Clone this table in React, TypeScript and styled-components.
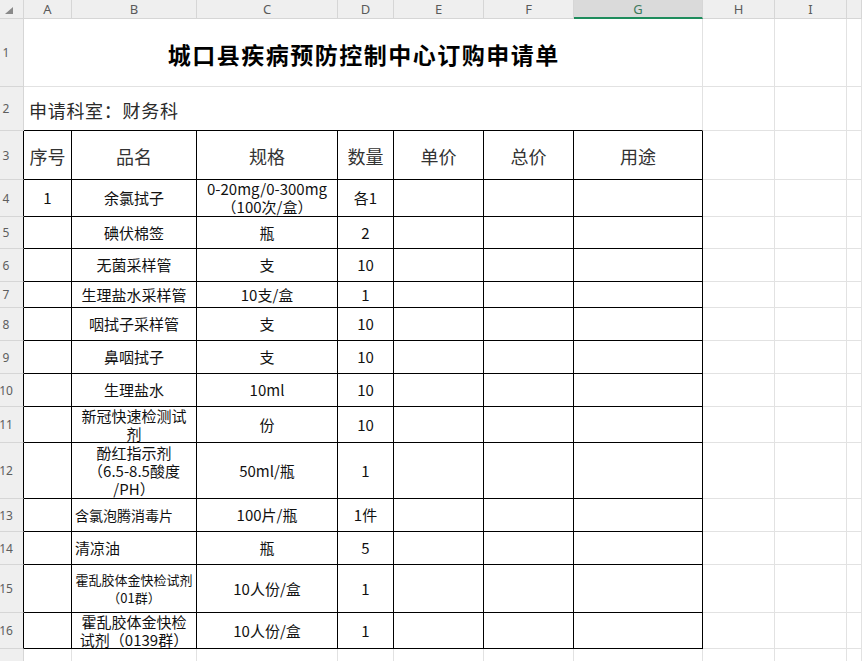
import React from "react";
import styled, { createGlobalStyle, css } from "styled-components";

const GlobalStyle = createGlobalStyle`
  html, body { margin: 0; padding: 0; background: #ffffff; overflow: hidden; }
  body { font-family: "Noto Sans CJK SC", "Noto Sans", sans-serif; }
`;

const COLS = [24, 48, 125, 141, 56, 90, 90, 129, 72, 72];
const ROWS = [19, 68, 44, 49, 37, 32, 33, 26, 33, 33, 33, 36, 56, 33, 33, 48, 36, 40];
const GRID = "#e2e2e2";
const HEAD_LINE = "#d6d6d6";

const Sheet = styled.div`
  display: grid;
  grid-template-columns: ${COLS.map((c) => c + "px").join(" ")} 1fr;
  grid-template-rows: ${ROWS.map((r) => r + "px").join(" ")};
  width: 862px;
  height: 661px;
  overflow: hidden;
  background: #fff;
`;

const Corner = styled.div`
  background: #efefef;
  border-right: 1px solid ${HEAD_LINE};
  border-bottom: 1px solid ${HEAD_LINE};
  box-sizing: border-box;
  display: flex;
  align-items: flex-start;
  padding: 7px 0 0 5px;
`;

const ColHeader = styled.div<{ $selected?: boolean }>`
  box-sizing: border-box;
  background: ${(p) => (p.$selected ? "#dadada" : "#efefef")};
  border-right: 1px solid ${HEAD_LINE};
  border-bottom: ${(p) => (p.$selected ? "2px solid #1e8c5c" : `1px solid ${HEAD_LINE}`)};
  color: ${(p) => (p.$selected ? "#3d7a5c" : "#5a5a5a")};
  font-family: "Noto Sans", "Liberation Sans", sans-serif;
  font-size: 13px;
  display: flex;
  align-items: center;
  justify-content: center;
  padding-top: ${(p) => (p.$selected ? "1px" : "0")};
`;

const RowHeader = styled.div<{ $boxed?: boolean }>`
  box-sizing: border-box;
  background: #efefef;
  border-bottom: 1px solid ${HEAD_LINE};
  border-right: 1px solid ${(p) => (p.$boxed ? "#000" : HEAD_LINE)};
  color: #5e5e5e;
  font-family: "Noto Sans", "Liberation Sans", sans-serif;
  font-size: 12px;
  display: flex;
  align-items: center;
  justify-content: center;
  padding-right: 11px;
`;

const Cell = styled.div<{
  $r?: boolean;
  $b?: boolean;
  $span?: number;
  $align?: "left" | "center";
  $size?: number;
}>`
  box-sizing: border-box;
  border-right: 1px solid ${(p) => (p.$r ? "#000" : GRID)};
  border-bottom: 1px solid ${(p) => (p.$b ? "#000" : GRID)};
  ${(p) => p.$span && css`grid-column: span ${p.$span};`}
  display: flex;
  align-items: center;
  justify-content: ${(p) => (p.$align === "left" ? "flex-start" : "center")};
  text-align: ${(p) => (p.$align === "left" ? "left" : "center")};
  padding: ${(p) => (p.$align === "left" ? "0 0 0 3px" : "0")};
  font-size: ${(p) => p.$size ?? 15}px;
  line-height: 18px;
  color: #111;
  white-space: nowrap;
  overflow: hidden;
`;

const Title = styled.span`
  font-size: 23px;
  font-weight: 700;
  letter-spacing: 1.5px;
  padding-left: 1.5px;
  color: #000;
  margin-top: 3px;
`;

const Dept = styled.span`
  font-size: 18px;
  letter-spacing: 0.7px;
  color: #2a2a2a;
  padding-left: 2px;
  margin-top: 2px;
`;

const HeadText = styled.span`
  font-size: 18px;
  color: #333;
  margin-top: 2px;
`;

const Lines = styled.span`
  display: flex;
  flex-direction: column;
  align-items: center;
`;

type Item = {
  seq?: string;
  name: React.ReactNode;
  spec: React.ReactNode;
  qty: string;
  nameAlign?: "left" | "center";
  nameSize?: number;
};

const items: Item[] = [
  {
    seq: "1",
    name: "余氯拭子",
    spec: (
      <Lines>
        <span>0-20mg/0-300mg</span>
        <span>（100次/盒）</span>
      </Lines>
    ),
    qty: "各1",
  },
  { name: "碘伏棉签", spec: "瓶", qty: "2" },
  { name: "无菌采样管", spec: "支", qty: "10" },
  { name: "生理盐水采样管", spec: "10支/盒", qty: "1" },
  { name: "咽拭子采样管", spec: "支", qty: "10" },
  { name: "鼻咽拭子", spec: "支", qty: "10" },
  { name: "生理盐水", spec: "10ml", qty: "10" },
  {
    name: (
      <Lines>
        <span>新冠快速检测试</span>
        <span>剂</span>
      </Lines>
    ),
    spec: "份",
    qty: "10",
  },
  {
    name: (
      <Lines>
        <span>酚红指示剂</span>
        <span>（6.5-8.5酸度</span>
        <span>/PH）</span>
      </Lines>
    ),
    spec: "50ml/瓶",
    qty: "1",
  },
  { name: "含氯泡腾消毒片", spec: "100片/瓶", qty: "1件", nameAlign: "left", nameSize: 14 },
  { name: "清凉油", spec: "瓶", qty: "5", nameAlign: "left" },
  {
    name: (
      <Lines>
        <span>霍乱胶体金快检试剂</span>
        <span>（01群）</span>
      </Lines>
    ),
    spec: "10人份/盒",
    qty: "1",
    nameSize: 13,
  },
  {
    name: (
      <Lines>
        <span>霍乱胶体金快检</span>
        <span>试剂（0139群）</span>
      </Lines>
    ),
    spec: "10人份/盒",
    qty: "1",
  },
];

const letters = ["A", "B", "C", "D", "E", "F", "G", "H", "I", ""];
const headers = ["序号", "品名", "规格", "数量", "单价", "总价", "用途"];

const CornerMark = () => (
  <svg width="8" height="7" viewBox="0 0 8 7">
    <polygon points="8,0 8,7 0,7" fill="#8a8a8a" />
  </svg>
);

const Extra = () => (
  <>
    <Cell />
    <Cell />
    <Cell />
  </>
);

export default function App() {
  return (
    <>
      <GlobalStyle />
      <Sheet>
        <Corner>
          <CornerMark />
        </Corner>
        {letters.map((l, i) => (
          <ColHeader key={i} $selected={l === "G"}>
            {l}
          </ColHeader>
        ))}

        <RowHeader>1</RowHeader>
        <Cell $span={7}>
          <Title>城口县疾病预防控制中心订购申请单</Title>
        </Cell>
        <Extra />

        <RowHeader>2</RowHeader>
        <Cell $span={7} $b $align="left">
          <Dept>申请科室：财务科</Dept>
        </Cell>
        <Extra />

        <RowHeader $boxed>3</RowHeader>
        {headers.map((h) => (
          <Cell key={h} $r $b>
            <HeadText>{h}</HeadText>
          </Cell>
        ))}
        <Extra />

        {items.map((it, i) => (
          <React.Fragment key={i}>
            <RowHeader $boxed>{i + 4}</RowHeader>
            <Cell $r $b>{it.seq ?? ""}</Cell>
            <Cell $r $b $align={it.nameAlign} $size={it.nameSize}>
              {it.name}
            </Cell>
            <Cell $r $b>{it.spec}</Cell>
            <Cell $r $b>{it.qty}</Cell>
            <Cell $r $b />
            <Cell $r $b />
            <Cell $r $b />
            <Extra />
          </React.Fragment>
        ))}

        <RowHeader>17</RowHeader>
        {letters.map((_, i) => (
          <Cell key={i} />
        ))}
      </Sheet>
    </>
  );
}
